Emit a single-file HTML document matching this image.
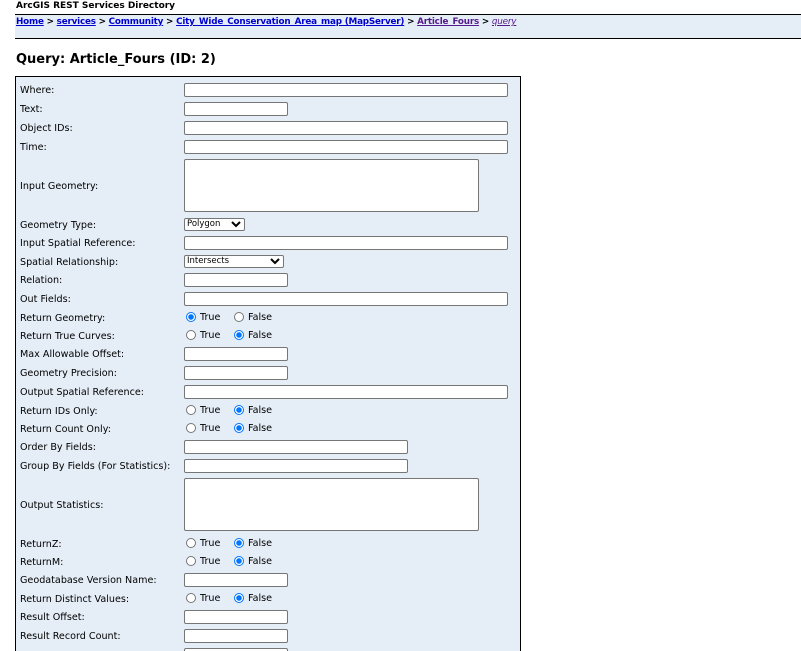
<!DOCTYPE html>
<html style="overflow:hidden;height:651px"><head><meta charset="utf-8"><style>
body{margin:0;width:801px;height:651px;overflow:hidden;background:#fff;font-family:"DejaVu Sans",Verdana,sans-serif;font-size:10px;color:#000;position:relative}
.a{position:absolute;white-space:nowrap}
.l{position:absolute;left:20px;font-size:9.6px;line-height:12px;margin-top:2px}
.i{position:absolute;left:184px;height:12px;border:1px solid #767676;border-radius:2px;background:#fff}
.w{width:322px}.s{width:102px}.m{width:222px}
.t{position:absolute;left:184px;width:293px;height:51px;border:1px solid #767676;border-radius:2px;background:#fff}
.r{position:absolute;width:8px;height:8px;border:1px solid #767676;border-radius:50%;background:#fff}
.r.c{border-color:#0075ff;background:radial-gradient(circle,#0075ff 0,#0075ff 2.5px,#fff 3px)}
.rt{position:absolute;font-size:9.6px;line-height:12px;margin-top:1px}
.sel{position:absolute;left:184px;height:11px;border:1px solid #767676;border-radius:2px;background:#fff;font-size:8.5px;line-height:11px;padding-left:2px;box-sizing:content-box}
.sel svg{position:absolute;right:3px;top:2px}
a{color:#00c;text-decoration:underline}
</style></head><body>
<div class="a" style="left:16px;top:0;font-weight:bold;font-size:9px;line-height:12px">ArcGIS REST Services Directory</div>
<div class="a" style="left:15px;top:14px;width:786px;height:23px;background:#e5eef7;border-top:1px solid #000;border-bottom:1px solid #000"></div>
<div class="a" style="left:16px;top:16px;font-weight:bold;font-size:8.8px;line-height:12px;letter-spacing:-0.2px"><a href="#">Home</a> &gt; <a href="#">services</a> &gt; <a href="#">Community</a> &gt; <a href="#">City_Wide_Conservation_Area_map (MapServer)</a> &gt; <a href="#" style="color:#551a8b">Article_Fours</a> &gt; <a href="#" style="font-style:italic;font-weight:normal;color:#551a8b">query</a></div>
<div class="a" style="left:16px;top:51px;font-weight:bold;font-size:13px;line-height:17px">Query: Article_Fours (ID: 2)</div>
<div class="a" style="left:15px;top:76px;width:504px;height:600px;background:#e5eef7;border:1px solid #000"></div>

<div class="l" style="top:83px">Where:</div><div class="i w" style="top:83px"></div>
<div class="l" style="top:102px">Text:</div><div class="i s" style="top:102px"></div>
<div class="l" style="top:121px">Object IDs:</div><div class="i w" style="top:121px"></div>
<div class="l" style="top:140px">Time:</div><div class="i w" style="top:140px"></div>
<div class="l" style="top:179px">Input Geometry:</div><div class="t" style="top:159px"></div>
<div class="l" style="top:218px">Geometry Type:</div><div class="sel" style="top:218px;width:57px">Polygon<svg width="10" height="7"><path d="M1 1L5 5L9 1" stroke="#000" stroke-width="2" fill="none"/></svg></div>
<div class="l" style="top:236px">Input Spatial Reference:</div><div class="i w" style="top:236px"></div>
<div class="l" style="top:255px">Spatial Relationship:</div><div class="sel" style="top:255px;width:96px">Intersects<svg width="10" height="7"><path d="M1 1L5 5L9 1" stroke="#000" stroke-width="2" fill="none"/></svg></div>
<div class="l" style="top:273px">Relation:</div><div class="i s" style="top:273px"></div>
<div class="l" style="top:292px">Out Fields:</div><div class="i w" style="top:292px"></div>
<div class="l" style="top:311px">Return Geometry:</div><div class="r c" style="left:186px;top:312px"></div><div class="rt" style="left:200px;top:311px">True</div><div class="r" style="left:234px;top:312px"></div><div class="rt" style="left:248px;top:311px">False</div>
<div class="l" style="top:329px">Return True Curves:</div><div class="r" style="left:186px;top:330px"></div><div class="rt" style="left:200px;top:329px">True</div><div class="r c" style="left:234px;top:330px"></div><div class="rt" style="left:248px;top:329px">False</div>
<div class="l" style="top:347px">Max Allowable Offset:</div><div class="i s" style="top:347px"></div>
<div class="l" style="top:366px">Geometry Precision:</div><div class="i s" style="top:366px"></div>
<div class="l" style="top:385px">Output Spatial Reference:</div><div class="i w" style="top:385px"></div>
<div class="l" style="top:404px">Return IDs Only:</div><div class="r" style="left:186px;top:405px"></div><div class="rt" style="left:200px;top:404px">True</div><div class="r c" style="left:234px;top:405px"></div><div class="rt" style="left:248px;top:404px">False</div>
<div class="l" style="top:422px">Return Count Only:</div><div class="r" style="left:186px;top:423px"></div><div class="rt" style="left:200px;top:422px">True</div><div class="r c" style="left:234px;top:423px"></div><div class="rt" style="left:248px;top:422px">False</div>
<div class="l" style="top:440px">Order By Fields:</div><div class="i m" style="top:440px"></div>
<div class="l" style="top:459px">Group By Fields (For Statistics):</div><div class="i m" style="top:459px"></div>
<div class="l" style="top:498px">Output Statistics:</div><div class="t" style="top:478px"></div>
<div class="l" style="top:537px">ReturnZ:</div><div class="r" style="left:186px;top:538px"></div><div class="rt" style="left:200px;top:537px">True</div><div class="r c" style="left:234px;top:538px"></div><div class="rt" style="left:248px;top:537px">False</div>
<div class="l" style="top:555px">ReturnM:</div><div class="r" style="left:186px;top:556px"></div><div class="rt" style="left:200px;top:555px">True</div><div class="r c" style="left:234px;top:556px"></div><div class="rt" style="left:248px;top:555px">False</div>
<div class="l" style="top:573px">Geodatabase Version Name:</div><div class="i s" style="top:573px"></div>
<div class="l" style="top:592px">Return Distinct Values:</div><div class="r" style="left:186px;top:593px"></div><div class="rt" style="left:200px;top:592px">True</div><div class="r c" style="left:234px;top:593px"></div><div class="rt" style="left:248px;top:592px">False</div>
<div class="l" style="top:610px">Result Offset:</div><div class="i s" style="top:610px"></div>
<div class="l" style="top:629px">Result Record Count:</div><div class="i s" style="top:629px"></div>
<div class="i s" style="top:648px"></div>
</body></html>
